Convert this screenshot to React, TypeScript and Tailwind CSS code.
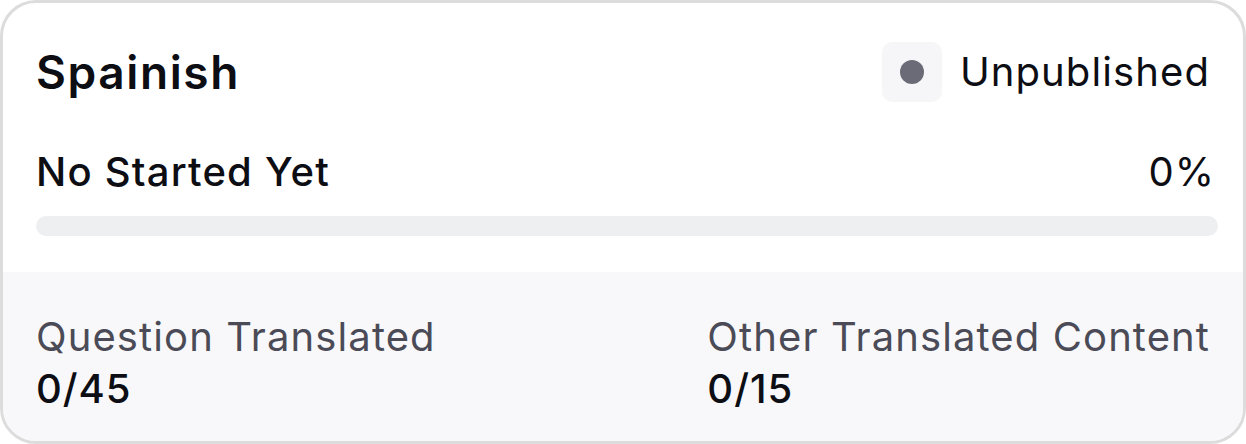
export default function App() {
  const stats = [
    { label: 'Question Translated', value: '0/45' },
    { label: 'Other Translated Content', value: '0/15' },
  ]
  const progress = 0

  return (
    <div className="w-[1246px] h-[444px] bg-white" style={{ fontFamily: 'Inter, "Noto Sans", sans-serif' }}>
      <div className="flex h-full flex-col overflow-hidden rounded-[36px] border-[3px] border-[#dcdcdc] bg-white">
        {/* Header + progress */}
        <div className="pl-[33px] pr-[25px] pt-[39px] pb-[36px]">
          <div className="flex h-[60px] items-center justify-between">
            <h2 className="text-[46px] font-semibold leading-[60px] tracking-[1.6px] text-[#0d0d14]">Spainish</h2>
            <div className="mr-[8px] flex items-center gap-[18px]">
              <div className="flex h-[60px] w-[60px] items-center justify-center rounded-[10px] bg-[#f6f6f8]">
                <span className="h-[24px] w-[24px] rounded-full bg-[#6b6b78]" />
              </div>
              <span className="text-[40px] leading-[60px] tracking-[1.1px] text-[#0d0d14]">Unpublished</span>
            </div>
          </div>

          <div className="mt-[40px] flex items-center justify-between">
            <span className="text-[40px] font-medium leading-[60px] tracking-[1.2px] text-[#0d0d14]">No Started Yet</span>
            <span className="mr-[3px] text-[40px] leading-[60px] tracking-[1px] text-[#0d0d14]">{progress}%</span>
          </div>

          <div className="mt-[14px] h-[20px] w-full rounded-full bg-[#eeeff1]">
            <div className="h-full rounded-full bg-[#6b6b78]" style={{ width: `${progress}%` }} />
          </div>
        </div>

        {/* Stats */}
        <div className="flex flex-1 justify-between bg-[#f8f8fa] pl-[33px] pr-[33px] pt-[39px]">
          {stats.map(s => (
            <div key={s.label} className="flex flex-col">
              <span className="text-[40px] leading-[52px] tracking-[1.1px] text-[#4b4b57]">{s.label}</span>
              <span className="text-[40px] font-medium leading-[52px] tracking-[1px] text-[#0d0d14]">{s.value}</span>
            </div>
          ))}
        </div>
      </div>
    </div>
  )
}
